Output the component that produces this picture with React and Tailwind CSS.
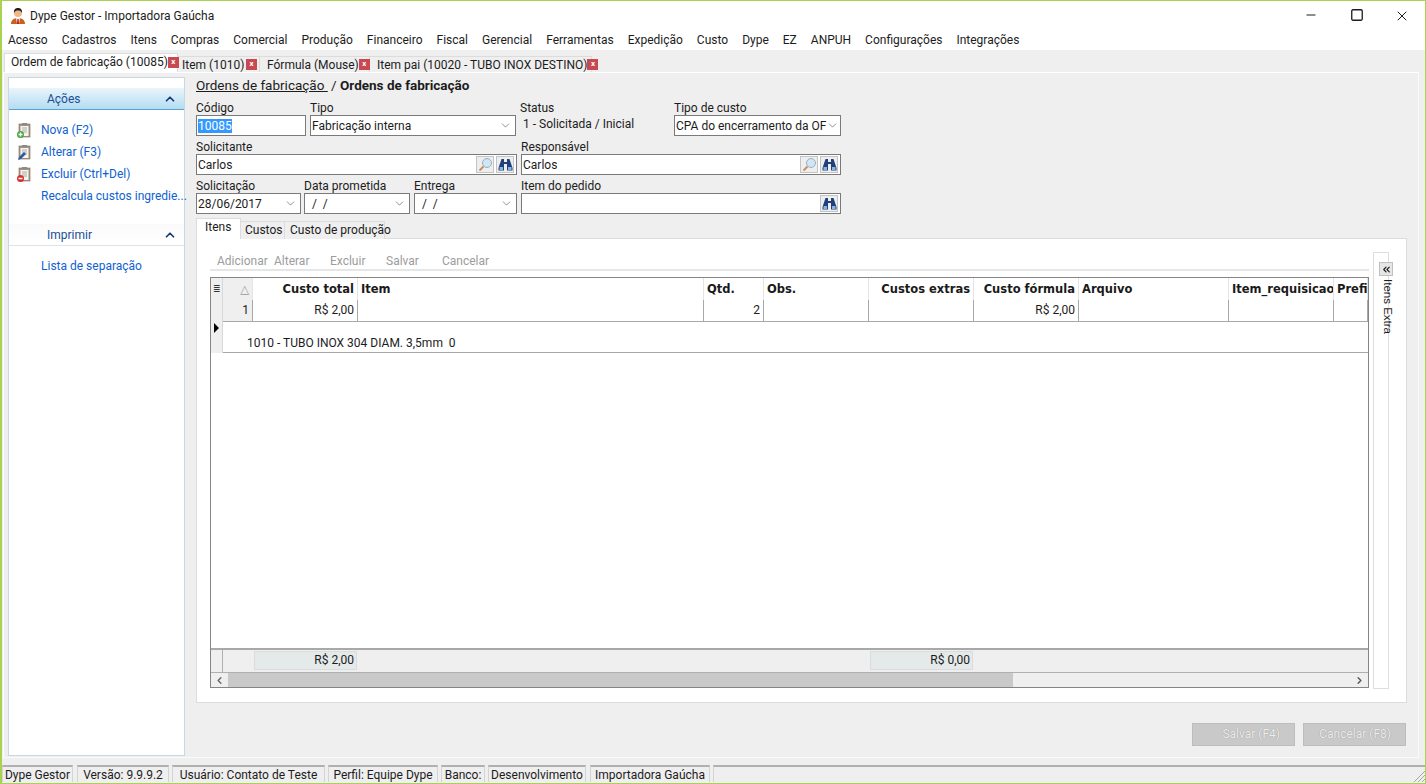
import React from "react";
import { ChevronDown, ChevronUp, ChevronLeft, ChevronRight, ChevronsLeft, Minus, Square, X } from "lucide-react";

const menus = ["Acesso", "Cadastros", "Itens", "Compras", "Comercial", "Produção", "Financeiro", "Fiscal", "Gerencial", "Ferramentas", "Expedição", "Custo", "Dype", "EZ", "ANPUH", "Configurações", "Integrações"];

const statusCells = [
  { text: "Dype Gestor", cls: "w-[71px] mr-[4px]" },
  { text: "Versão: 9.9.9.2", cls: "w-[92px] mr-[3px]" },
  { text: "Usuário: Contato de Teste", cls: "w-[153px] mr-[3px]" },
  { text: "Perfil: Equipe Dype", cls: "w-[110px] mr-[3px]" },
  { text: "Banco:", cls: "w-[44px] mr-[3px]" },
  { text: "Desenvolvimento", cls: "w-[98px] mr-[4px]" },
  { text: "Importadora Gaúcha", cls: "w-[120px] mr-[3px]" },
];

const columns = [
  { title: "", cell: "1", cls: "w-[30px]", align: "text-right" },
  { title: "Custo total", cell: "R$ 2,00", cls: "w-[105px]", align: "text-right" },
  { title: "Item", cell: "", cls: "w-[346px]", align: "text-left" },
  { title: "Qtd.", cell: "2", cls: "w-[60px]", align: "text-left", cellAlign: "text-right" },
  { title: "Obs.", cell: "", cls: "w-[105px]", align: "text-left" },
  { title: "Custos extras", cell: "", cls: "w-[105px]", align: "text-right" },
  { title: "Custo fórmula", cell: "R$ 2,00", cls: "w-[105px]", align: "text-right" },
  { title: "Arquivo", cell: "", cls: "w-[150px]", align: "text-left" },
  { title: "Item_requisicao", cell: "", cls: "w-[105px]", align: "text-left" },
  { title: "Prefixo", cell: "", cls: "w-[34px]", align: "text-left" },
];

function UserIcon() {
  return (
    <svg width="16" height="18" viewBox="0 0 16 18" className="shrink-0">
      <path d="M1 17c0-4 3-6 7-6s7 2 7 6z" fill="#c8601e" />
      <path d="M6 11h4l-1 6H7z" fill="#f4f0e8" />
      <path d="M7.4 12h1.2l.4 5H7z" fill="#c01818" />
      <circle cx="8" cy="6" r="4" fill="#f0b888" />
      <path d="M4 6c-.5-4 2-5 4-5s4.500 1 4 5c-1-2-2-2.500-4-2.500S5 4 4 6z" fill="#1c1c1c" />
    </svg>
  );
}

function ClipboardIcon({ kind }) {
  return (
    <svg width="16" height="17" viewBox="0 0 16 17" className="shrink-0">
      <rect x="3" y="2" width="11" height="13" fill="#a89880" stroke="#7c6a58" strokeWidth="0.6" />
      <rect x="4.500" y="4" width="8" height="10" fill="#f4f4f0" />
      <rect x="6" y="1" width="5" height="2.500" fill="#8a8a8a" />
      <path d="M6 6h5M6 8h5M6 10h5" stroke="#9a9a9a" strokeWidth="0.8" />
      {kind === "add" && (
        <>
          <circle cx="4.500" cy="12.500" r="3.500" fill="#48a848" />
          <path d="M2.500 12.500h4M4.500 10.500v4" stroke="#fff" strokeWidth="1.300" />
        </>
      )}
      {kind === "edit" && <path d="M2 16l1-3 5-5 2 2-5 5z" fill="#2a5aa8" />}
      {kind === "del" && (
        <>
          <circle cx="4.500" cy="12.500" r="3.500" fill="#d83030" />
          <path d="M2.500 12.500h4" stroke="#fff" strokeWidth="1.500" />
        </>
      )}
    </svg>
  );
}

function LookupButton() {
  return (
    <div className="w-[18px] h-[17px] shrink-0 border border-[#c4c4c4] bg-[#eeeeee] flex items-center justify-center">
      <svg width="15" height="15" viewBox="0 0 15 15">
        <circle cx="9" cy="6" r="4.500" fill="#cfe6f4" stroke="#9ab0bc" />
        <path d="M5.500 9.500L1.500 13.500" stroke="#c88a60" strokeWidth="1.800" />
      </svg>
    </div>
  );
}

function BinocularButton() {
  return (
    <div className="w-[18px] h-[17px] shrink-0 border border-[#c4c4c4] bg-[#eeeeee] flex items-center justify-center">
      <svg width="15" height="14" viewBox="0 0 15 14">
        <path d="M3.500 1h2.500v3h3V1h2.500l3 9v2.500H9V6H6v6.500H.500V10z" fill="#20407c" />
        <rect x="1.500" y="9" width="3.500" height="3" fill="#8ab4e0" />
        <rect x="10" y="9" width="3.500" height="3" fill="#8ab4e0" />
      </svg>
    </div>
  );
}

function Field({ label, className, children }) {
  return (
    <div className={className}>
      <div className="h-[14px] leading-[14px] whitespace-nowrap">{label}</div>
      {children}
    </div>
  );
}

function InputBox({ children, className = "" }) {
  return (
    <div className={`h-[21px] bg-white border border-[#7a7a7a] flex items-center pl-[1px] pr-[2px] ${className}`}>
      {children}
    </div>
  );
}

function SelectBox({ value }) {
  return (
    <InputBox className="justify-between">
      <span className="whitespace-pre">{value}</span>
      <ChevronDown size={13} strokeWidth={1} className="mr-[1px] shrink-0 text-[#333333]" />
    </InputBox>
  );
}

function SideItem({ icon, children }) {
  return (
    <div className="h-[22px] flex items-center text-[#0f62d0] whitespace-nowrap">
      <div className="w-[25px] shrink-0 flex justify-start">{icon}</div>
      {children}
    </div>
  );
}

function ItemGrid() {
  return (
    <div className="h-[411px] border border-[#858585] flex flex-col bg-white overflow-hidden">
      {/* header + linha + detalhe */}
      <div className="flex">
        <div className="w-[12px] shrink-0 bg-[#efefef] border-r border-[#d8d8d8] flex flex-col items-center">
          <div className="h-[22px] flex items-center text-[9px] leading-none text-[#333333]">≣</div>
          <div className="h-[21px]" />
          <div className="mt-[2px] w-0 h-0 border-y-[5px] border-y-transparent border-l-[5px] border-l-black" />
        </div>
        <div className="flex-1 min-w-0 overflow-hidden">
          <div className="flex h-[22px]">
            {columns.map((c, i) => (
              <div key={i} className={`${c.cls} shrink-0 px-[3px] border-r border-[#e4e4e4] ${c.align} font-['DejaVu_Sans'] font-bold text-[11.500px] leading-[23px] whitespace-nowrap overflow-hidden text-[#1a1a1a] ${i === 0 ? "bg-[#efefef] text-center" : ""}`}>
                {i === 0 ? <span className="font-normal text-[#999999]">△</span> : c.title}
              </div>
            ))}
          </div>
          <div className="flex h-[22px] border-b border-[#a8a8a8]">
            {columns.map((c, i) => (
              <div key={i} className={`${c.cls} shrink-0 px-[3px] border-r border-[#a8a8a8] ${c.cellAlign || c.align} leading-[21px] whitespace-nowrap ${i === 0 ? "bg-[#efefef]" : ""}`}>
                {c.cell}
              </div>
            ))}
          </div>
          <div className="h-[31px] border-b border-[#a8a8a8] flex items-end pl-[24px] pb-[1px] leading-[15px] whitespace-pre">
            1010 - TUBO INOX 304 DIAM. 3,5mm  0
          </div>
        </div>
      </div>
      <div className="flex-1 border-b-2 border-[#a8a8a8]" />
      {/* totais */}
      <div className="h-[23px] bg-[#efefef] border-b border-[#b0b0b0] flex shrink-0">
        <div className="w-[12px] border-r border-[#b0b0b0]" />
        <div className="w-[31px]" />
        <div className="w-[103px] h-[19px] mt-[1px] bg-[#e4e9ea] border border-[#dcdcdc] text-right pr-[2px] leading-[17px]">R$ 2,00</div>
        <div className="w-[513px]" />
        <div className="w-[103px] h-[19px] mt-[1px] bg-[#e4e9ea] border border-[#dcdcdc] text-right pr-[2px] leading-[17px]">R$ 0,00</div>
      </div>
      {/* scroll */}
      <div className="h-[14px] shrink-0 bg-[#efefef] flex items-center">
        <div className="w-[17px] flex justify-center">
          <ChevronLeft size={11} strokeWidth={3} className="text-[#666666]" />
        </div>
        <div className="w-[785px] h-[14px] bg-[#c9c9c9]" />
        <div className="flex-1" />
        <div className="w-[17px] flex justify-center">
          <ChevronRight size={11} strokeWidth={3} className="text-[#555555]" />
        </div>
      </div>
    </div>
  );
}

function CloseTab({ className = "" }) {
  return (
    <span className={`w-[11px] h-[11px] bg-[#c84a50] text-white text-[8px] leading-[10px] text-center font-bold shrink-0 ${className}`}>x</span>
  );
}

function WindowTab({ w, label, pad, mr }) {
  return (
    <div className={`${w} ${pad} h-[16px] shrink-0 border-t border-r border-[#dcdcdc] flex items-center whitespace-nowrap`}>
      <span className="flex-1">{label}</span>
      <CloseTab className={mr} />
    </div>
  );
}

function DisabledButton({ label }) {
  return (
    <div className="w-[103px] h-[23px] bg-[#c9c9c9] border border-[#bdbdbd] text-right pr-[14px] leading-[21px] text-[#ededed] [text-shadow:0_0_1px_#8a8a8a]">
      {label}
    </div>
  );
}

export default function App() {
  return (
    <div className="w-[1426px] h-[784px] overflow-hidden flex flex-col bg-[#efefef] border-t border-r border-b border-l-2 border-[#a9d24f] font-['Roboto','Liberation_Sans',sans-serif] text-[12px] text-[#1c1c1c]">
      {/* barra de titulo */}
      <div className="h-[29px] shrink-0 bg-white flex items-center pl-[8px]">
        <UserIcon />
        <span className="ml-[4px]">Dype Gestor - Importadora Gaúcha</span>
        <div className="ml-auto flex">
          <div className="w-[46px] flex justify-center"><Minus size={14} strokeWidth={1} absoluteStrokeWidth /></div>
          <div className="w-[45px] flex justify-center"><Square size={14} strokeWidth={1.300} absoluteStrokeWidth /></div>
          <div className="w-[46px] flex justify-center"><X size={16} strokeWidth={1} absoluteStrokeWidth /></div>
        </div>
      </div>

      {/* menu */}
      <div className="h-[20px] shrink-0 bg-white flex items-center pl-[6px] gap-[14px] whitespace-nowrap">
        {menus.map((m) => (
          <span key={m}>{m}</span>
        ))}
      </div>

      {/* abas de janela */}
      <div className="h-[22px] shrink-0 flex items-end pl-[2px] bg-[#efefef]">
        <div className="h-[19px] w-[174px] shrink-0 bg-white border-t border-x border-[#dcdcdc] flex items-center pl-[6px] pb-[2px] whitespace-nowrap">
          <span className="flex-1">Ordem de fabricação (10085)</span>
          <CloseTab className="mr-[5px]" />
        </div>
        <WindowTab w="w-[82px]" pad="pl-[4px]" mr="mr-[2px]" label="Item (1010)" />
        <WindowTab w="w-[110px]" pad="pl-[7px]" mr="mr-[3px]" label="Fórmula (Mouse)" />
        <WindowTab w="w-[222px]" pad="pl-[7px]" mr="mr-[3px]" label="Item pai (10020 - TUBO INOX DESTINO)" />
      </div>

      {/* conteudo */}
      <div className="h-[686px] shrink-0 w-[1416px] ml-[1px] bg-[#efefef] border border-t-white border-l-white border-r-[#fafafa] border-b-[#fafafa] flex pt-[4px] pl-[4px]">
        <aside className="w-[177px] h-[679px] shrink-0 bg-white border border-[#c8d8e0] pt-[10px]">
          <div className="h-[22px] flex items-center justify-between pl-[38px] pr-[7px] bg-gradient-to-b from-[#e9f5fb] to-[#b4dcf2] border-b border-[#5aa2cf] text-[#1a4f94]">
            <span>Ações</span>
            <ChevronUp size={14} strokeWidth={3} className="text-[#123a7c]" />
          </div>
          <div className="pl-[7px] pt-[9px]">
            <SideItem icon={<ClipboardIcon kind="add" />}>Nova (F2)</SideItem>
            <SideItem icon={<ClipboardIcon kind="edit" />}>Alterar (F3)</SideItem>
            <SideItem icon={<ClipboardIcon kind="del" />}>Excluir (Ctrl+Del)</SideItem>
            <SideItem>Recalcula custos ingredie...</SideItem>
          </div>
          <div className="mt-[17px] h-[22px] flex items-center justify-between pl-[38px] pr-[7px] border-b border-[#dbe5ea] bg-gradient-to-b from-[#fafafa] to-white text-[#1a4f94]">
            <span>Imprimir</span>
            <ChevronUp size={14} strokeWidth={3} className="text-[#123a7c]" />
          </div>
          <div className="pl-[7px] pt-[9px]">
            <SideItem>Lista de separação</SideItem>
          </div>
        </aside>

        <main className="w-[1211px] ml-[11px] shrink-0">
          <div className="h-[24px] pt-[1px] text-[13.500px] leading-[15px] whitespace-pre">
            <span className="underline">Ordens de fabricação </span>
            <span> / </span>
            <span className="font-bold">Ordens de fabricação</span>
          </div>

          <div className="flex mb-[4px]">
            <Field label="Código" className="w-[110px] mr-[4px]">
              <InputBox>
                <span className="bg-[#3399ff] text-white leading-[14px]">10085</span>
              </InputBox>
            </Field>
            <Field label="Tipo" className="w-[206px] mr-[4px]">
              <SelectBox value="Fabricação interna" />
            </Field>
            <Field label="Status" className="w-[154px]">
              <div className="h-[21px] pl-[3px] leading-[18px]">1 - Solicitada / Inicial</div>
            </Field>
            <Field label="Tipo de custo" className="w-[167px]">
              <SelectBox value="CPA do encerramento da OF" />
            </Field>
          </div>

          <div className="flex mb-[4px] w-[645px]">
            <Field label="Solicitante" className="w-[321px] mr-[4px]">
              <InputBox className="gap-[2px]">
                <span className="flex-1">Carlos</span>
                <LookupButton />
                <BinocularButton />
              </InputBox>
            </Field>
            <Field label="Responsável" className="w-[320px]">
              <InputBox className="gap-[2px]">
                <span className="flex-1">Carlos</span>
                <LookupButton />
                <BinocularButton />
              </InputBox>
            </Field>
          </div>

          <div className="flex mb-[4px] w-[645px]">
            <Field label="Solicitação" className="w-[105px] mr-[3px]">
              <SelectBox value="28/06/2017" />
            </Field>
            <Field label="Data prometida" className="w-[106px] mr-[4px]">
              <SelectBox value="  /  /" />
            </Field>
            <Field label="Entrega" className="w-[103px] mr-[4px]">
              <SelectBox value="  /  /" />
            </Field>
            <Field label="Item do pedido" className="w-[320px]">
              <InputBox className="justify-end">
                <BinocularButton />
              </InputBox>
            </Field>
          </div>

          {/* abas internas */}
          <div className="flex items-end h-[21px] -mb-[1px] relative whitespace-nowrap">
            <div className="h-[21px] w-[45px] bg-white border-t border-x border-[#dcdcdc] pl-[8px] leading-[17px]">Itens</div>
            <div className="h-[18px] w-[44px] bg-[#efefef] border-t border-r border-[#dcdcdc] pl-[4px] leading-[17px]">Custos</div>
            <div className="h-[18px] w-[100px] bg-[#efefef] border-t border-r border-[#dcdcdc] pl-[5px] leading-[17px]">Custo de produção</div>
          </div>
          <div className="h-[465px] bg-white border border-[#dcdcdc] flex pl-[13px]">
            <div className="w-[1159px] shrink-0">
              <div className="h-[15px] mt-[15px] flex text-[#9c9c9c] whitespace-nowrap leading-[15px]">
                <span className="w-[57px] pl-[7px]">Adicionar</span>
                <span className="w-[56px] pl-[7px]">Alterar</span>
                <span className="w-[56px] pl-[7px]">Excluir</span>
                <span className="w-[56px] pl-[7px]">Salvar</span>
                <span className="pl-[7px]">Cancelar</span>
              </div>
              <div className="h-[2px] bg-[#e6e6e6] mb-[6px]" />
              <ItemGrid />
            </div>
            <div className="w-[16px] h-[437px] ml-[4px] mt-[13px] border border-[#dedede] shrink-0">
              <div className="w-[14px] h-[14px] ml-[5px] mt-[9px] bg-[#e6e6e6] border border-[#c0c0c0] flex items-center justify-center">
                <ChevronsLeft size={11} strokeWidth={2.500} />
              </div>
              <div className="ml-[5px] mt-[3px] [writing-mode:vertical-rl] whitespace-nowrap font-['Liberation_Sans'] text-[11.500px]">Itens Extra</div>
            </div>
          </div>

          {/* botoes */}
          <div className="flex justify-end gap-[8px] mt-[20px] pr-[1px]">
            <DisabledButton label="Salvar (F4)" />
            <DisabledButton label="Cancelar (F8)" />
          </div>
        </main>
      </div>

      {/* barra de status */}
      <div className="flex-1 flex items-end pb-[1px] pt-[7px] min-h-0">
        {statusCells.map((s) => (
          <div key={s.text} className={`${s.cls} h-[17px] shrink-0 border-t-2 border-x border-[#b0b0b0] border-x-[#d4d4d4] text-center leading-[16px] whitespace-nowrap`}>
            {s.text}
          </div>
        ))}
        <div className="flex-1 h-[17px] border-t-2 border-l border-[#b0b0b0] border-l-[#d4d4d4] flex justify-end items-end">
          <svg width="12" height="12" viewBox="0 0 12 12">
            <path d="M12 1L1 12M12 5L5 12M12 9L9 12" stroke="#a8a8a8" strokeWidth="1" />
          </svg>
        </div>
      </div>
    </div>
  );
}
